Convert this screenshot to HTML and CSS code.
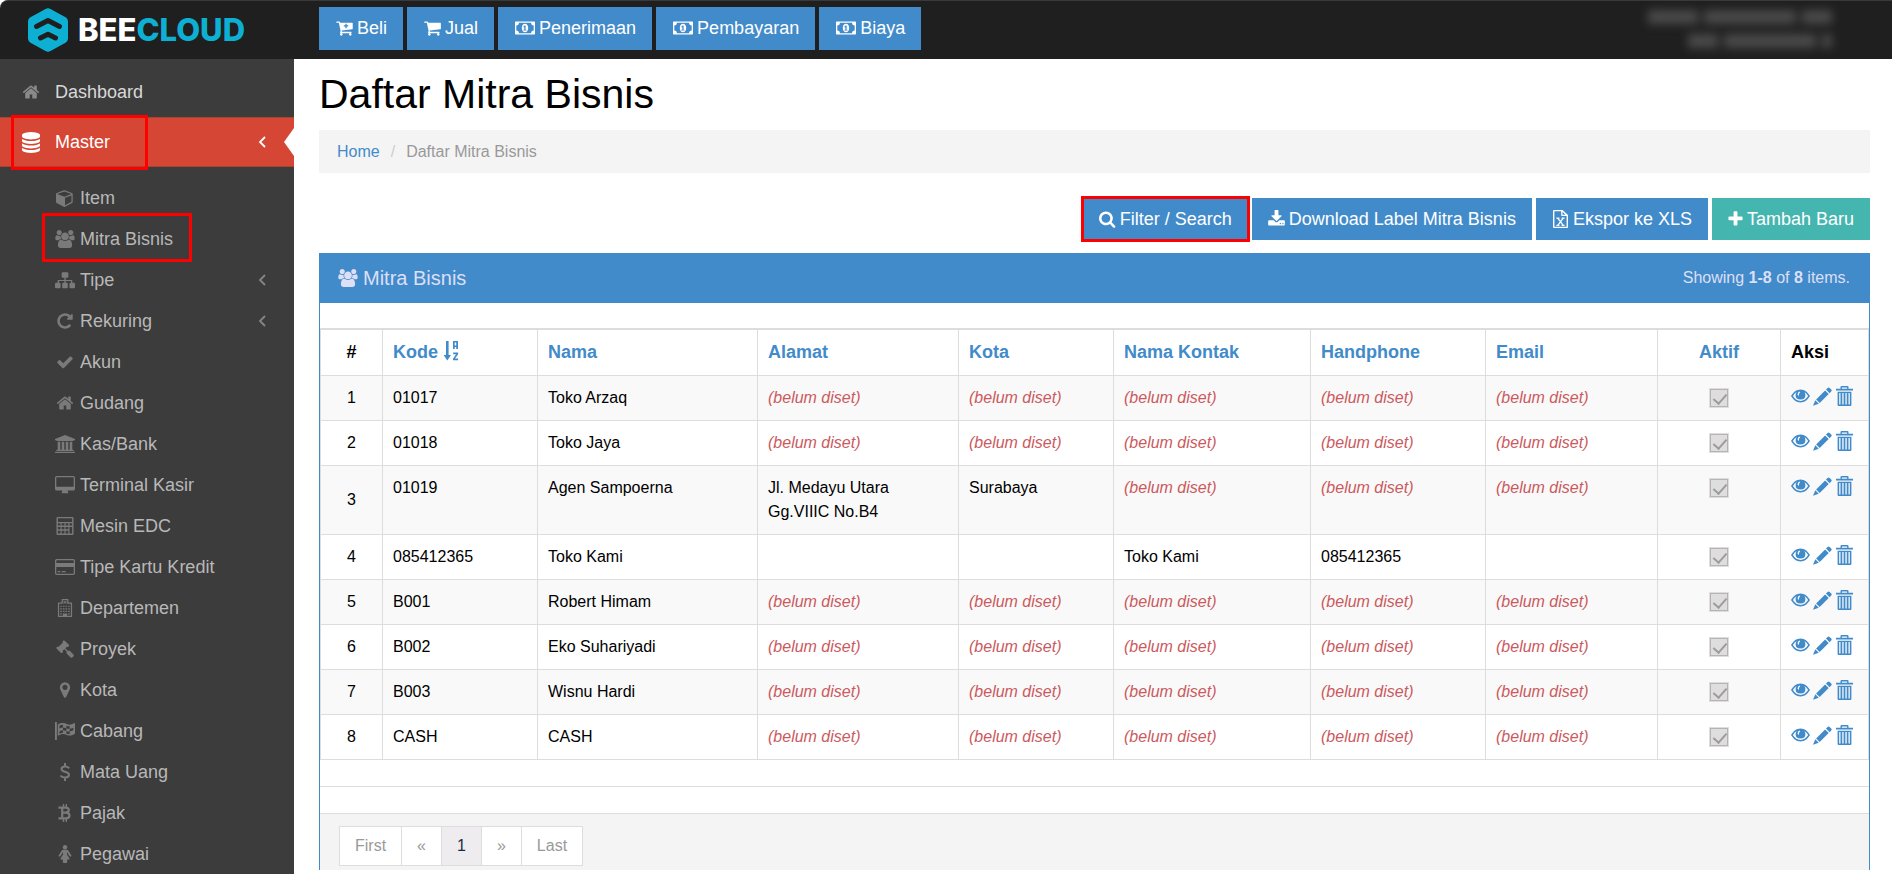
FILE: index.html
```html
<!DOCTYPE html>
<html lang="id">
<head>
    <meta charset="UTF-8">
    <meta name="viewport" content="width=device-width, initial-scale=1.0">
    <title>Daftar Mitra Bisnis</title>

    <link rel="stylesheet" href="styles.css">
</head>

<body>
    <!-- Icon sprite -->
    <svg class="sprite" aria-hidden="true">
        <symbol id="home" viewBox="0 0 1792 1792"><path d="M1472 992v480q0 26-19 45t-45 19h-384v-384h-256v384h-384q-26 0-45-19t-19-45v-480q0-1 .5-3t.5-3l575-474 575 474q1 2 1 6zm223-69l-62 74q-8 9-21 11h-3q-13 0-21-7l-692-577-692 577q-12 8-24 7-13-2-21-11l-62-74q-8-10-7-23.5t11-21.5l719-599q32-26 76-26t76 26l244 204v-195q0-14 9-23t23-9h192q14 0 23 9t9 23v408l219 182q10 8 11 21.5t-7 23.5z"/></symbol>
        <symbol id="database" viewBox="128 0 1536 1792"><path d="M896 768q237 0 443-43t325-127v170q0 69-103 128t-280 93.5-385 34.5-385-34.5-280-93.5-103-128v-170q119 84 325 127t443 43zm0 768q237 0 443-43t325-127v170q0 69-103 128t-280 93.5-385 34.5-385-34.5-280-93.5-103-128v-170q119 84 325 127t443 43zm0-384q237 0 443-43t325-127v170q0 69-103 128t-280 93.5-385 34.5-385-34.5-280-93.5-103-128v-170q119 84 325 127t443 43zm0-1152q208 0 385 34.5t280 93.5 103 128v128q0 69-103 128t-280 93.5-385 34.5-385-34.5-280-93.5-103-128v-128q0-69 103-128t280-93.5 385-34.5z"/></symbol>
        <symbol id="cube" viewBox="0 0 1792 1792"><path d="M896 1629l640-349v-636l-640 233v752zm-64-865l698-254-698-254-698 254zm832-252v768q0 35-18 65t-49 47l-704 384q-28 16-61 16t-61-16l-704-384q-31-17-49-47t-18-65v-768q0-40 23-73t61-47l704-256q22-8 44-8t44 8l704 256q38 14 61 47t23 73z"/></symbol>
        <symbol id="group" viewBox="0 0 1920 1792"><path d="M593 896q-162 5-265 128h-134q-82 0-138-40.5t-56-118.5q0-353 124-353 6 0 43.5 21t97.5 42.5 119 21.5q67 0 133-23-5 37-5 66 0 139 81 256zm1071 637q0 120-73 189.5t-194 69.5h-874q-121 0-194-69.5t-73-189.5q0-53 3.5-103.5t14-109 26.5-108.5 43-97.5 62-81 85.5-53.5 111.5-20q10 0 43 21.5t73 48 107 48 135 21.5 135-21.5 107-48 73-48 43-21.5q61 0 111.5 20t85.5 53.5 62 81 43 97.5 26.5 108.5 14 109 3.5 103.5zm-1024-1277q0 106-75 181t-181 75-181-75-75-181 75-181 181-75 181 75 75 181zm704 384q0 159-112.5 271.5t-271.5 112.5-271.5-112.5-112.5-271.5 112.5-271.5 271.5-112.5 271.5 112.5 112.5 271.5zm576 225q0 78-56 118.5t-138 40.5h-134q-103-123-265-128 81-117 81-256 0-29-5-66 66 23 133 23 59 0 119-21.5t97.5-42.5 43.5-21q124 0 124 353zm-128-609q0 106-75 181t-181 75-181-75-75-181 75-181 181-75 181 75 75 181z"/></symbol>
        <symbol id="sitemap" viewBox="0 0 18 16"><path d="M7 1h4a1 1 0 0 1 1 1v3a1 1 0 0 1-1 1H9.600v1.900H15a.6.6 0 0 1 .6.6V10.500H17a1 1 0 0 1 1 1v3a1 1 0 0 1-1 1h-3a1 1 0 0 1-1-1v-3a1 1 0 0 1 1-1h.4V9H9.600v1.500h.900a1 1 0 0 1 1 1v3a1 1 0 0 1-1 1h-3a1 1 0 0 1-1-1v-3a1 1 0 0 1 1-1h.9V9H3.600v1.500H4a1 1 0 0 1 1 1v3a1 1 0 0 1-1 1H1a1 1 0 0 1-1-1v-3a1 1 0 0 1 1-1h1.400v-2a.6.6 0 0 1 .6-.6h5.400V6H7a1 1 0 0 1-1-1V2a1 1 0 0 1 1-1z"/></symbol>
        <symbol id="repeat" viewBox="0 0 1792 1792"><path d="M1664 256v448q0 26-19 45t-45 19h-448q-42 0-59-40-17-39 14-69l138-138q-148-137-349-137-104 0-198.500 40.500t-163.500 109.500-109.500 163.500-40.500 198.500 40.500 198.500 109.500 163.500 163.500 109.500 198.500 40.500q119 0 225-52t179-147q7-10 23-12 15 0 25 9l137 138q9 8 9.500 20.500t-7.500 22.500q-109 132-264 204.500t-327 72.500q-156 0-298-61t-245-164-164-245-61-298 61-298 164-245 245-164 298-61q147 0 284.500 55.500t244.500 156.500l130-129q29-31 70-14 39 17 39 59z"/></symbol>
        <symbol id="check" viewBox="0 0 1792 1792"><path d="M1671 566q0 40-28 68l-724 724-136 136q-28 28-68 28t-68-28l-136-136-362-362q-28-28-28-68t28-68l136-136q28-28 68-28t68 28l294 295 656-657q28-28 68-28t68 28l136 136q28 28 28 68z"/></symbol>
        <symbol id="bank" viewBox="0 0 20 18"><path d="M10 0l10 4v1.300h-1.300q0 .7-.8.7H2.100q-.8 0-.8-.7H0V4zM2.700 6.700h2.600v8h1.400v-8h2.600v8h1.400v-8h2.600v8h1.400v-8h2.600v8h.6q.8 0 .8.700v.6H1.300v-.6q0-.7.8-.7h.6zM.8 16.700h18.400q.8 0 .8.700V18H0v-.6q0-.7.8-.7z"/></symbol>
        <symbol id="desktop" viewBox="0 0 20 18"><path fill-rule="evenodd" d="M1.700 0h16.600Q20 0 20 1.700v11.200q0 1.700-1.700 1.700h-5.600q0 .9.600 2 .2.600-.3.700H7q-.5-.1-.3-.7.600-1.100.6-2H1.700Q0 14.600 0 12.900V1.700Q0 0 1.700 0zm0 1.200q-.4 0-.4.500v8.600q0 .4.4.4h16.600q.4 0 .4-.4V1.700q0-.5-.4-.5z"/></symbol>
        <symbol id="calc" viewBox="0 0 18 19"><path fill-rule="evenodd" d="M1.300 0h15.400Q18 0 18 1.300v16.400q0 1.300-1.300 1.300H1.300Q0 19 0 17.700V1.300Q0 0 1.300 0zm.2 1.300v3.900h15V1.300zm0 5.300v2.500h2.800V6.600zm4 0v2.500h2.900V6.600zm4.100 0v2.500h2.900V6.600zm4.100 0v2.500h2.800V6.600zM1.500 10.500V13h2.800v-2.500zm4 0V13h2.900v-2.500zm4.100 0V13h2.900v-2.500zm4.100 0v7h2.800v-7zM1.500 14.600v2.900h2.800v-2.900zm4 0v2.900h2.900v-2.900zm4.100 0v2.900h2.900v-2.900z"/></symbol>
        <symbol id="card" viewBox="0 0 20 16"><path fill-rule="evenodd" d="M1.700 0h16.600Q20 0 20 1.700v12.600q0 1.700-1.700 1.700H1.700Q0 16 0 14.300V1.700Q0 0 1.700 0zm0 1.300q-.4 0-.4.400V4h17.400V1.700q0-.4-.4-.4zM1.300 8v6.300q0 .4.4.4h16.600q.4 0 .4-.4V8zM2.700 12h2.600v1.300H2.700zM6.700 12h4v1.300h-4z"/></symbol>
        <symbol id="building" viewBox="0 0 15 19"><path fill-rule="evenodd" d="M4.500 0h6q.6 0 .6.600V3.800h3.300q.6 0 .6.600v14q0 .6-.6.600H.6q-.6 0-.6-.6v-14q0-.6.6-.6h3.300V.6q0-.6.6-.6zm.7 1.300v3.800H1.300v12.600h3.900v-2q0-.5.5-.5h3.600q.5 0 .5.500v2h3.900V5.100H9.800V1.300zM6 2h1v1h1V2h1v3H8V4H7v1H6zM2.500 7h1.700v1.300H2.500zm2.800 0H7v1.300H5.300zM8 7h1.700v1.300H8zm2.800 0h1.700v1.300h-1.700zM2.500 9.700h1.700V11H2.500zm2.800 0H7V11H5.300zm2.700 0h1.700V11H8zm2.800 0h1.700V11h-1.700zM2.500 12.400h1.700v1.300H2.500zm2.800 0H7v1.300H5.300zm2.700 0h1.700v1.300H8zm2.800 0h1.700v1.300h-1.700zM2.500 15h1.700v1.300H2.500zm8.300 0h1.700v1.300h-1.700z"/></symbol>
        <symbol id="gavel" viewBox="0 0 1792 1792"><path d="M1771 1536q0 53-37 90l-107 108q-39 37-91 37-53 0-90-37l-363-364q-38-36-38-90 0-53 43-96l-256-256-126 126q-14 14-34 14t-34-14q2 2 12.500 12t12.500 13 10 11.500 10 13.500 6 13.500 5.500 16.500 1.500 18q0 38-28 68-3 3-16.500 18t-19 20.500-18.500 16.500-22 15.500-22 9-26 4.500q-40 0-68-28l-408-408q-28-28-28-68 0-13 4.500-26t9-22 15.500-22 16.500-18.500 20.500-19 18-16.500q30-28 68-28 10 0 18 1.500t16.500 5.500 13.500 6 13.500 10 11.500 10 13 12.500 12 12.500q-14-14-14-34t14-34l348-348q14-14 34-14t34 14q-2-2-12.500-12t-12.500-13-10-11.500-10-13.500-6-13.500-5.500-16.500-1.500-18q0-38 28-68 3-3 16.500-18t19-20.500 18.500-16.500 22-15.500 22-9 26-4.500q40 0 68 28l408 408q28 28 28 68 0 13-4.500 26t-9 22-15.500 22-16.500 18.500-20.500 19-18 16.500q-30 28-68 28-10 0-18-1.500t-16.500-5.500-13.500-6-13.500-10-11.500-10-13-12.500-12-12.500q14 14 14 34t-14 34l-126 126 256 256q43-43 96-43 52 0 91 37l363 363q37 39 37 91z"/></symbol>
        <symbol id="marker" viewBox="0 0 1792 1792"><path d="M1152 640q0-106-75-181t-181-75-181 75-75 181 75 181 181 75 181-75 75-181zm256 0q0 109-33 179l-364 774q-16 33-47.500 52t-67.500 19-67.500-19-46.500-52l-365-774q-33-70-33-179 0-212 150-362t362-150 362 150 150 362z"/></symbol>
        <symbol id="flag" viewBox="0 0 18 16"><path fill-rule="evenodd" d="M0 0h1.700v16H0zM2.500 2.200C6 .3 8.500.6 11 1.900c2 .9 4 .2 7-1.300v9.800c-3 1.700-5 2.200-7.500 1.100-2.500-1.200-4.500-1-8 .7zM4 3.100v2.600q1.700-.8 3.200-.9V2.300Q5.700 2.300 4 3.100zm6.200.1v2.400q1.600.6 3 .4V3.700q-1.500.1-3-.5zM7.200 4.900v2.500q1.400 0 3 .7V5.600q-1.500-.7-3-.7zm6 1.100v2.500q1.600-.2 3.300-1.100V5q-1.700.9-3.300 1zM4 8.200v2.200q1.700-.7 3.200-.8V7.400Q5.700 7.400 4 8.200zm6.200 0v2.100q1.600.7 3 .5V8.500q-1.400.2-3-.3z"/></symbol>
        <symbol id="dollar" viewBox="0 0 12 18"><path fill="none" stroke="currentColor" stroke-width="2" d="M6 0v3M6 15v3M10.300 5.200Q8.300 3.500 5.800 3.600 2.600 3.800 2.500 6 2.500 8 6 8.800q4 .9 4 3.200 0 2.400-3.700 2.500-2.900 0-4.900-1.900"/></symbol>
        <symbol id="bitcoin" viewBox="0 0 13 18"><path fill="none" stroke="currentColor" stroke-width="2.200" d="M0 3.600h7q3.300 0 3.300 2.500T7 8.700H3.500M7 8.700q4 0 4 2.800t-4 2.800H0M3.700 3.600v10.700"/><path fill="none" stroke="currentColor" stroke-width="1.400" d="M5 0v3M7.800 0v3M5 15v3M7.800 15v3"/></symbol>
        <symbol id="female" viewBox="0 0 13 18"><circle cx="6.500" cy="2.200" r="2.200"/><path d="M4.500 4.800h4q.7 0 1.200.8l3.100 4.700q.4.900-.3 1.300-.8.400-1.300-.3L8.700 7.600h-.3v1.600l2.700 4.600q.2.700-.5.7H8.700v2.300q0 1.200-1 1.200H5.300q-1 0-1-1.200v-2.300H2.400q-.7 0-.5-.7l2.700-4.600V7.600h-.3l-2.500 3.700q-.5.7-1.300.3-.7-.4-.3-1.300l3.100-4.700q.5-.8 1.200-.8z"/></symbol>
        <symbol id="search" viewBox="64 0 1728 1792"><path d="M1216 832q0-185-131.500-316.500t-316.500-131.500-316.500 131.500-131.500 316.500 131.500 316.500 316.500 131.500 316.500-131.500 131.500-316.500zm512 832q0 52-38 90t-90 38q-54 0-90-38l-343-342q-179 124-399 124-143 0-273.500-55.500t-225-150-150-225-55.500-273.500 55.500-273.500 150-225 225-150 273.500-55.500 273.500 55.500 225 150 150 225 55.500 273.500q0 220-124 399l343 343q37 37 37 90z"/></symbol>
        <symbol id="download" viewBox="64 0 1664 1792"><path d="M1344 1344q0-26-19-45t-45-19-45 19-19 45 19 45 45 19 45-19 19-45zm256 0q0-26-19-45t-45-19-45 19-19 45 19 45 45 19 45-19 19-45zm128-224v320q0 40-28 68t-68 28h-1472q-40 0-68-28t-28-68v-320q0-40 28-68t68-28h465l135 136q58 56 136 56t136-56l136-136h464q40 0 68 28t28 68zm-325-569q17 41-14 70l-448 448q-18 19-45 19t-45-19l-448-448q-31-29-14-70 17-39 59-39h256v-448q0-26 19-45t45-19h256q26 0 45 19t19 45v448h256q42 0 59 39z"/></symbol>
        <symbol id="plus" viewBox="192 0 1408 1792"><path d="M1600 736v192q0 40-28 68t-68 28h-416v416q0 40-28 68t-68 28h-192q-40 0-68-28t-28-68v-416h-416q-40 0-68-28t-28-68v-192q0-40 28-68t68-28h416v-416q0-40 28-68t68-28h192q40 0 68 28t28 68v416h416q40 0 68 28t28 68z"/></symbol>
        <symbol id="excel" viewBox="0 0 15 18"><path fill-rule="evenodd" d="M1 0h8.500L15 5v12q0 1-1 1H1q-1 0-1-1V1q0-1 1-1zm.4 1.300v15.400h12.200V6H9q-.8 0-.8-.8V1.300zM9.500 1.800v2.900h3z"/><path fill="none" stroke="currentColor" stroke-width="1.300" d="M3.400 8.200h3M8.600 8.200h3M3.400 15.300h3M8.600 15.300h3M4.800 8.200l5.400 7.100M10.200 8.200l-5.400 7.100"/></symbol>
        <symbol id="cart" viewBox="64 0 1664 1792"><path d="M704 1536q0 52-38 90t-90 38-90-38-38-90 38-90 90-38 90 38 38 90zm896 0q0 52-38 90t-90 38-90-38-38-90 38-90 90-38 90 38 38 90zm128-1088v512q0 24-16.500 42.500t-40.500 21.500l-1044 122q13 60 13 70 0 16-24 64h920q26 0 45 19t19 45-19 45-45 19h-1024q-26 0-45-19t-19-45q0-11 8-31.500t16-36 21.500-40 15.500-29.500l-177-823h-204q-26 0-45-19t-19-45 19-45 45-19h256q16 0 28.500 6.500t19.500 15.500 13 24.500 8 26 5.500 29.500 4.500 26h1201q26 0 45 19t19 45z"/></symbol>
        <symbol id="cart-plus" viewBox="64 0 1664 1792"><use href="#cart" x="64" y="0" width="1664" height="1792"/><path fill="none" stroke="#428bca" stroke-width="130" d="M1050 470v440M830 690h440"/></symbol>
        <symbol id="money" viewBox="0 0 20 13"><path fill-rule="evenodd" d="M.7 0h18.600q.7 0 .7.700v11.600q0 .7-.7.700H.7q-.7 0-.7-.7V.7Q0 0 .7 0zm3.200 1.300q0 2.600-2.600 2.600v5.200q2.600 0 2.600 2.600h12.200q0-2.600 2.600-2.600V3.900q-2.600 0-2.600-2.600zM10 2.200c2 0 3.200 1.900 3.200 4.300S12 10.800 10 10.800 6.800 8.900 6.800 6.500 8 2.200 10 2.200zM9.600 4L8.200 5.200l.6.700.5-.4v2.700h-1v.9h3.200v-.9h-.9V4z"/></symbol>
        <symbol id="left" viewBox="0 0 8 12"><path fill="none" stroke="currentColor" stroke-width="1.800" d="M7 1L2 6l5 5"/></symbol>
        <symbol id="sort" viewBox="0 0 16 20"><path d="M3 0h2.600v14H8L4.300 19.500.6 14H3z"/><path fill-rule="evenodd" d="M10 0h5v8h-1.800V6h-1.500v2H10zm1.700 1.500v3h1.500v-3zM10.200 11.500h4.900v1.700L12 17.600h3.100v1.700H10v-1.600l3-4.500h-2.800z"/></symbol>
        <symbol id="eye" viewBox="0 0 19 20"><path fill-rule="evenodd" d="M9.500 3.500c4 0 7.300 2.800 9.500 6.500-2.200 3.700-5.500 6.500-9.500 6.500S2.200 13.700 0 10c2.200-3.700 5.500-6.500 9.500-6.500zM5.600 6Q3.300 7.500 1.900 10q3.100 4.900 7.600 4.900t7.600-4.900q-1.400-2.500-3.700-4 1 1.300 1 3.200 0 4.400-4.900 4.400T4.600 9.200q0-1.900 1-3.200zM8.700 5.500Q6.600 6 6.600 8.200q.2 1.800 1.300 1.400Q7.800 7.300 9.200 6.300z"/></symbol>
        <symbol id="pencil" viewBox="0 0 19 20"><path d="M14.600 2q1-1 2 0l1.600 1.600q1 1 0 2l-1.600 1.600L13 3.600zM12.100 4.500l3.600 3.600-9 9-3.600-3.600zM2.300 14.300l3.500 3.500L0 19.800z"/></symbol>
        <symbol id="trash" viewBox="0 0 17 20"><path fill-rule="evenodd" d="M5.500 0h6q1 0 1 1v1.700H17v1.800H0V2.700h4.500V1q0-1 1-1zm.4 1.400v1.300h5.200V1.400zM1.600 5.700h13.800V19q0 1-1 1H2.600q-1 0-1-1zM3.200 7v11.600h1.300V7zm3.100 0v11.600h1.300V7zm3.100 0v11.600h1.300V7zm3.100 0v11.600h1.300V7z"/></symbol>
        <symbol id="logo" viewBox="0 0 40 44"><path fill="#0db0d3" d="M17.500.9q2.500-1.300 5 0l15 8.300Q40 10.700 40 13.300v17.200q0 2.600-2.500 4.200l-15 8.400q-2.500 1.300-5 0l-15-8.400Q0 33.100 0 30.500V13.300q0-2.600 2.500-4.100z"/><path fill="none" stroke="#1f1f1f" stroke-width="5" stroke-linecap="round" stroke-linejoin="round" d="M8.500 18.500L20 12.500l11.500 6M12.500 30L20 26.300 27.500 30"/></symbol>
    </svg>

    <header class="topbar">
        <a class="brand" href="#"><svg><use href="#logo"/></svg><span>BEE<b>CLOUD</b></span></a>
        <nav class="shortcuts">
            <a class="btn" href="#"><svg class="icon"><use href="#cart-plus"/></svg>Beli</a>
            <a class="btn" href="#"><svg class="icon"><use href="#cart"/></svg>Jual</a>
            <a class="btn" href="#"><svg class="icon wide"><use href="#money"/></svg>Penerimaan</a>
            <a class="btn" href="#"><svg class="icon wide"><use href="#money"/></svg>Pembayaran</a>
            <a class="btn" href="#"><svg class="icon wide"><use href="#money"/></svg>Biaya</a>
        </nav>
        <div class="account">
            <div class="masked"><i class="md"></i><i class="lg"></i><i class="sm"></i></div>
            <div class="masked"><i class="sm"></i><i class="lg"></i><i class="xs"></i></div>
        </div>
    </header>

    <div class="page">
        <nav class="sidebar">
            <ul class="menu">
                <li><a href="#"><svg class="icon"><use href="#home"/></svg>Dashboard</a></li>
                <li class="active">
                    <a href="#"><svg class="icon"><use href="#database"/></svg>Master<svg class="arrow"><use href="#left"/></svg></a>
                    <span class="mark"></span>
                </li>
            </ul>
            <ul class="submenu">
                <li><a href="#"><svg class="icon"><use href="#cube"/></svg>Item</a></li>
                <li><a href="#"><svg class="icon"><use href="#group"/></svg>Mitra Bisnis</a><span class="mark"></span></li>
                <li><a href="#"><svg class="icon"><use href="#sitemap"/></svg>Tipe<svg class="arrow"><use href="#left"/></svg></a></li>
                <li><a href="#"><svg class="icon"><use href="#repeat"/></svg>Rekuring<svg class="arrow"><use href="#left"/></svg></a></li>
                <li><a href="#"><svg class="icon"><use href="#check"/></svg>Akun</a></li>
                <li><a href="#"><svg class="icon"><use href="#home"/></svg>Gudang</a></li>
                <li><a href="#"><svg class="icon"><use href="#bank"/></svg>Kas/Bank</a></li>
                <li><a href="#"><svg class="icon"><use href="#desktop"/></svg>Terminal Kasir</a></li>
                <li><a href="#"><svg class="icon"><use href="#calc"/></svg>Mesin EDC</a></li>
                <li><a href="#"><svg class="icon"><use href="#card"/></svg>Tipe Kartu Kredit</a></li>
                <li><a href="#"><svg class="icon"><use href="#building"/></svg>Departemen</a></li>
                <li><a href="#"><svg class="icon"><use href="#gavel"/></svg>Proyek</a></li>
                <li><a href="#"><svg class="icon"><use href="#marker"/></svg>Kota</a></li>
                <li><a href="#"><svg class="icon"><use href="#flag"/></svg>Cabang</a></li>
                <li><a href="#"><svg class="icon"><use href="#dollar"/></svg>Mata Uang</a></li>
                <li><a href="#"><svg class="icon"><use href="#bitcoin"/></svg>Pajak</a></li>
                <li><a href="#"><svg class="icon"><use href="#female"/></svg>Pegawai</a></li>
            </ul>
        </nav>

        <main class="content">
            <h1>Daftar Mitra Bisnis</h1>
            <div class="breadcrumb"><a href="#">Home</a><span class="slash">/</span><span>Daftar Mitra Bisnis</span></div>

            <div class="toolbar">
                <button class="btn marked" type="button"><svg class="icon"><use href="#search"/></svg>Filter / Search</button>
                <a class="btn" href="#"><svg class="icon"><use href="#download"/></svg>Download Label Mitra Bisnis</a>
                <a class="btn" href="#"><svg class="icon"><use href="#excel"/></svg>Ekspor ke XLS</a>
                <a class="btn btn-success" href="#"><svg class="icon narrow"><use href="#plus"/></svg>Tambah Baru</a>
            </div>

            <section class="panel">
                <div class="panel-heading">
                    <h2><svg class="icon wide"><use href="#group"/></svg>Mitra Bisnis</h2>
                    <div>Showing <b>1-8</b> of <b>8</b> items.</div>
                </div>
                <table>
                    <colgroup>
                        <col class="c-no"><col class="c-kode"><col class="c-nama"><col class="c-alamat"><col class="c-kota">
                        <col class="c-kontak"><col class="c-hp"><col class="c-email"><col class="c-aktif"><col class="c-aksi">
                    </colgroup>
                    <thead>
                        <tr>
                            <th class="center">#</th>
                            <th><a href="#">Kode <svg class="sort"><use href="#sort"/></svg></a></th>
                            <th><a href="#">Nama</a></th>
                            <th><a href="#">Alamat</a></th>
                            <th><a href="#">Kota</a></th>
                            <th><a href="#">Nama Kontak</a></th>
                            <th><a href="#">Handphone</a></th>
                            <th><a href="#">Email</a></th>
                            <th class="center"><a href="#">Aktif</a></th>
                            <th>Aksi</th>
                        </tr>
                    </thead>
                    <tbody id="rows"></tbody>
                </table>
                <div class="spacer"></div>
                <div class="panel-footer">
                    <ul class="pagination">
                        <li><a href="#">First</a></li>
                        <li><a href="#">«</a></li>
                        <li class="current"><a href="#">1</a></li>
                        <li><a href="#">»</a></li>
                        <li><a href="#">Last</a></li>
                    </ul>
                </div>
            </section>
        </main>
    </div>

    <script src="script.js"></script>
</body>
</html>
```
FILE: styles.css
```css
* {
    padding: 0;
    margin: 0;
    box-sizing: border-box;
}

:root {
    --blue: #428bca;
    --line: #dddddd;
    --mark: #ff0000;
}

body {
    background-color: #ffffff;
    color: #000000;
    font-family: "Liberation Sans", Arial, sans-serif;
    font-size: 16px;
    line-height: 24px;
    height: 100vh;
    overflow: hidden;
    display: flex;
    flex-direction: column;
}

a {
    color: var(--blue);
    text-decoration: none;
}

ul {
    list-style: none;
}

.sprite {
    display: none;
}

.icon {
    width: 17px;
    height: 18px;
    flex: none;
    fill: currentColor;
}

.icon.wide {
    width: 20px;
}

.icon.narrow {
    width: 15px;
}

/* Top bar */
.topbar {
    display: flex;
    flex: none;
    height: 59px;
    background-color: #1f1f1f;
    border-top: 1px solid #393939;
    border-top-left-radius: 8px;
}

.brand {
    display: flex;
    align-items: center;
    gap: 10px;
    width: 319px;
    padding: 0 0 0 28px;
    color: #ffffff;
    font-family: Inter, "Liberation Sans", sans-serif;
    font-size: 31px;
    font-weight: 800;
}

.brand svg {
    width: 40px;
    height: 44px;
}

.brand b {
    color: #0db0d3;
    font-weight: 800;
}

.shortcuts {
    display: flex;
    align-items: flex-start;
    gap: 4px;
    padding-top: 6px;
}

.btn {
    display: flex;
    align-items: center;
    gap: 4px;
    padding: 9px 16px;
    border: 0;
    background-color: var(--blue);
    color: #ffffff;
    font-family: inherit;
    font-size: 18px;
    line-height: 24px;
    white-space: nowrap;
}

.shortcuts .btn {
    padding: 9px 16px 10px 17px;
}

.btn-success {
    background-color: #45b6af;
}

.btn.marked {
    outline: 3px solid var(--mark);
    outline-offset: -1px;
}

/* Account name, hidden behind a blur */
.account {
    display: flex;
    flex-direction: column;
    align-items: flex-end;
    gap: 10px;
    margin-left: auto;
    padding: 9px 60px 0 0;
    filter: blur(5px);
}

.masked {
    display: flex;
    gap: 6px;
}

.masked i {
    height: 14px;
    background-color: #4a4a4a;
}

.masked .lg {
    width: 92px;
}

.masked .md {
    width: 50px;
}

.masked .sm {
    width: 30px;
}

.masked .xs {
    width: 10px;
}

.page {
    display: flex;
    flex: 1;
    min-height: 0;
}

/* Sidebar */
.sidebar {
    flex: none;
    width: 294px;
    background-color: #3c3c3c;
}

.menu {
    padding: 8px 0 10px;
}

.sidebar li {
    position: relative;
}

.sidebar a {
    display: flex;
    align-items: center;
    color: #d8d8d8;
    font-size: 18px;
}

.menu a {
    gap: 15px;
    height: 50px;
    padding: 0 28px 0 22px;
}

.sidebar .icon {
    width: 18px;
    color: #8a8a8a;
}

.menu .active a {
    background-color: #d64635;
    border-top: 1px solid #a8432f;
    border-bottom: 1px solid #a8432f;
    color: #ffffff;
}

.menu .active .icon {
    height: 21px;
    color: #ffffff;
}

/* White notch pointing at the open section */
.menu .active::after {
    content: "";
    position: absolute;
    top: 11px;
    right: 0;
    border: 14px solid transparent;
    border-left-width: 0;
    border-right: 10px solid #ffffff;
}

.arrow {
    width: 8px;
    height: 12px;
    margin-left: auto;
}

.submenu a {
    gap: 5px;
    height: 41px;
    padding: 0 28px 0 55px;
    color: #b8b8b8;
}

.submenu .icon {
    width: 20px;
    color: #7a7a7a;
}

.submenu .arrow {
    color: #858585;
}

.mark {
    position: absolute;
    top: -5px;
    left: 42px;
    width: 150px;
    height: 49px;
    border: 3px solid var(--mark);
    pointer-events: none;
}

.menu .mark {
    top: -2px;
    left: 11px;
    width: 137px;
    height: 55px;
}

/* Content */
.content {
    flex: 1;
    min-width: 0;
    padding: 11px 22px 0 25px;
}

h1 {
    font-size: 41px;
    font-weight: normal;
    line-height: 48px;
    margin-bottom: 12px;
}

.breadcrumb {
    display: flex;
    padding: 10px 18px 9px;
    background-color: #f4f4f4;
    color: #999999;
}

.slash {
    padding: 0 11px;
    color: #cccccc;
}

.toolbar {
    display: flex;
    justify-content: flex-end;
    gap: 4px;
    margin: 25px 0 13px;
}

.panel {
    border: 1px solid var(--blue);
    border-width: 0 1px;
}

.panel-heading {
    display: flex;
    justify-content: space-between;
    align-items: center;
    height: 50px;
    padding: 0 20px 0 19px;
    margin: 0 -1px;
    background-color: var(--blue);
    color: #dcdff5;
}

h2 {
    display: flex;
    align-items: center;
    gap: 5px;
    font-size: 20px;
    font-weight: normal;
}

/* Table */
table {
    width: 100%;
    margin-top: 25px;
    border-collapse: collapse;
    table-layout: fixed;
}

th,
td {
    padding: 10px;
    border: 1px solid var(--line);
    text-align: left;
    vertical-align: top;
}

th {
    padding: 10px 10px 11px;
    border-top-width: 2px;
    font-size: 18px;
}

tbody tr:nth-child(odd) {
    background-color: #f9f9f9;
}

.center {
    text-align: center;
}

td.center {
    vertical-align: middle;
}

.c-no { width: 62px; }
.c-kode { width: 155px; }
.c-nama { width: 220px; }
.c-alamat { width: 201px; }
.c-kota { width: 155px; }
.c-kontak { width: 197px; }
.c-hp { width: 175px; }
.c-email { width: 172px; }
.c-aktif { width: 123px; }
.c-aksi { width: 88px; }

.sort {
    width: 16px;
    height: 20px;
    fill: currentColor;
    vertical-align: -3px;
}

.unset {
    color: #cb5a5e;
}

td input {
    appearance: none;
    display: block;
    position: relative;
    width: 18px;
    height: 18px;
    margin: 3px auto;
    border: 1px solid #b9b2b4;
    outline: 1px solid #dedede;
    background-color: #dedede;
}

td input::after {
    content: "";
    position: absolute;
    top: 1px;
    left: 5px;
    width: 6px;
    height: 11px;
    border: solid #9c9c9c;
    border-width: 0 2px 2px 0;
    transform: rotate(42deg);
}

.actions {
    display: flex;
    gap: 3px;
}

.actions svg {
    display: block;
    width: 19px;
    height: 20px;
    fill: currentColor;
}

.spacer {
    height: 54px;
    border-bottom: 1px solid var(--line);
    background: linear-gradient(var(--line), var(--line)) 0 26px / 100% 1px no-repeat;
}

/* Pagination */
.panel-footer {
    padding: 12px 19px 4px;
    background-color: #f4f4f4;
}

.pagination {
    display: flex;
}

.pagination a {
    display: block;
    padding: 7px 15px;
    border: 1px solid var(--line);
    background-color: #ffffff;
    color: #999999;
}

.pagination li + li {
    margin-left: -1px;
}

.pagination .current a {
    background-color: #eeecee;
    color: #1d2b45;
}
```
FILE: script.js
```js
// kode, nama, alamat, kota, kontak, handphone, email (null = belum diset)
var partners = [
    ["01017", "Toko Arzaq", null, null, null, null, null],
    ["01018", "Toko Jaya", null, null, null, null, null],
    ["01019", "Agen Sampoerna", "Jl. Medayu Utara Gg.VIIIC No.B4", "Surabaya", null, null, null],
    ["085412365", "Toko Kami", "", "", "Toko Kami", "085412365", ""],
    ["B001", "Robert Himam", null, null, null, null, null],
    ["B002", "Eko Suhariyadi", null, null, null, null, null],
    ["B003", "Wisnu Hardi", null, null, null, null, null],
    ["CASH", "CASH", null, null, null, null, null]
];

function action(icon, label) {
    return '<a href="#" aria-label="' + label + '"><svg><use href="#' + icon + '"/></svg></a>';
}

var html = "";
partners.forEach(function (partner, index) {
    html += '<tr><td class="center">' + (index + 1) + '</td>';
    partner.forEach(function (value) {
        html += value === null ? '<td><em class="unset">(belum diset)</em></td>' : '<td>' + value + '</td>';
    });
    html += '<td><input type="checkbox" aria-label="Aktif" checked disabled></td>';
    html += '<td><div class="actions">' + action("eye", "Lihat") + action("pencil", "Ubah") + action("trash", "Hapus") + '</div></td></tr>';
});
document.querySelector("#rows").innerHTML = html;
```
